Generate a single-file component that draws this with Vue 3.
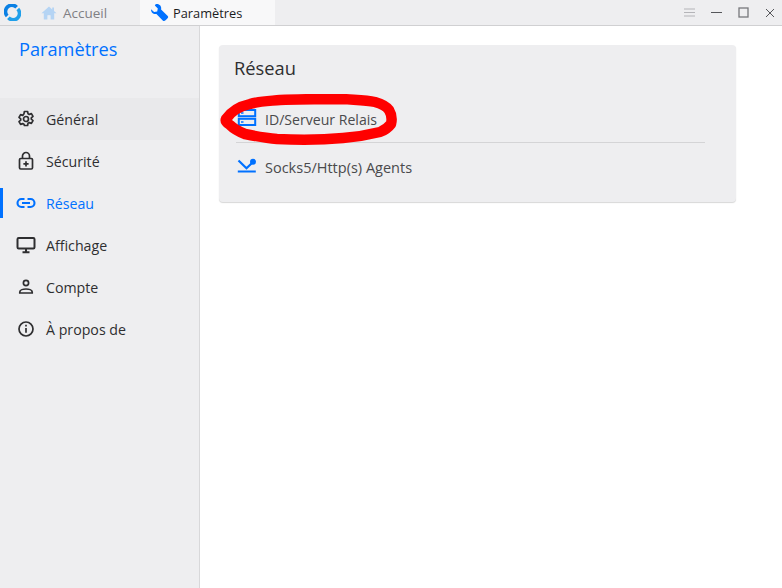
<script setup>
const items = [
  { label: 'Général', icon: 'gear', hover: true },
  { label: 'Sécurité', icon: 'lock' },
  { label: 'Réseau', icon: 'link', active: true },
  { label: 'Affichage', icon: 'monitor' },
  { label: 'Compte', icon: 'person' },
  { label: 'À propos de', icon: 'info' },
]
</script>

<template>
  <div class="app">
    <header class="titlebar">
      <div class="logo">
        <svg width="17" height="17" viewBox="0 0 17 17" fill="none">
          <path d="M12.600 3.200A6.300 6.300 0 0 0 3.200 12" stroke="#0a80e4" stroke-width="3.600" />
          <path d="M4.400 13.800A6.300 6.300 0 0 0 13.800 5" stroke="#1f9fea" stroke-width="3.600" />
        </svg>
      </div>
      <div class="tab home">
        <svg width="16" height="16" viewBox="0 0 16 16" fill="#b5d4f4">
          <path d="M8 1.500 .5 8.200h2.300v6.300h3.600v-4.300h3.200v4.300h3.600V8.200h2.300L13 6V2.600h-1.800v1.800L8 1.500Z" />
          <path d="M7.200 10.500h1.600v4H7.200z" fill="#e3eefa" />
        </svg>
        <span>Accueil</span>
      </div>
      <div class="tab current">
        <svg width="19" height="19" viewBox="0 0 18 18" fill="#0071ff">
          <path d="M6.500 1c2.700 0 4.700 2.400 4 5.100l6.300 6.200c.8.800.5 1.600-.6 2.700L15 16.200c-1.100 1-1.900 1.300-2.700.5L6.100 10.400c-2.800.7-5.400-1.500-5.100-4.400l2.900 2.600 2.900-.6.600-2.800-2.800-2.900C5.200 1.100 5.900 1 6.500 1Z" />
        </svg>
        <span>Paramètres</span>
      </div>
      <div class="controls">
        <svg width="11" height="9" viewBox="0 0 11 9" stroke="#b4b4b8" fill="none"><path d="M0 1h11M0 4.500h11M0 8h11" /></svg>
        <svg width="11" height="9" viewBox="0 0 11 9" stroke="#55565a" fill="none"><path d="M0 4.500h11" /></svg>
        <svg width="11" height="11" viewBox="0 0 11 11" stroke="#77787c" stroke-width="1.300" fill="none"><rect x="1" y="1" width="9" height="9" /></svg>
        <svg width="10" height="10" viewBox="0 0 10 10" stroke="#55565a" fill="none"><path d="M1 1l8 8M9 1l-8 8" /></svg>
      </div>
    </header>

    <div class="body">
      <aside class="sidebar">
        <h1 class="side-title">Paramètres</h1>
        <nav class="nav">
          <div v-for="item in items" :key="item.label" class="nav-item" :class="{ hover: item.hover, active: item.active }">
            <svg class="nav-icon" width="20" height="20" viewBox="0 0 20 20" fill="none" stroke="currentColor" stroke-width="1.700">
              <template v-if="item.icon === 'gear'">
                <path stroke-linejoin="round" d="M8.400 2.500h3.200l.4 2.200 1.300.7 2.100-.8 1.600 2.800-1.700 1.400v1.400l1.700 1.400-1.600 2.800-2.100-.8-1.300.7-.4 2.200H8.400L8 15.300l-1.300-.7-2.100.8L3 12.600l1.700-1.400V9.800L3 8.400l1.600-2.800 2.100.8L8 4.700Z" />
                <circle cx="10" cy="10" r="2.500" />
              </template>
              <template v-else-if="item.icon === 'lock'">
                <rect x="3.500" y="7.500" width="13" height="10.500" rx="1.200" />
                <path d="M6.500 7.500V5a3.500 3.500 0 0 1 7 0v2.500M10 10.200v5.300M7.400 12.800h5.200" />
              </template>
              <template v-else-if="item.icon === 'link'">
                <path stroke-width="2.100" d="M8.500 6H5.500a4 4 0 0 0 0 8h3M11.500 6h3a4 4 0 0 1 0 8h-3M6 10h8" />
              </template>
              <template v-else-if="item.icon === 'monitor'">
                <rect x="1.500" y="3" width="17" height="10.500" rx="1.200" stroke-width="2" />
                <path d="M10 14v3M6.500 17.300h7" stroke-width="2" />
              </template>
              <template v-else-if="item.icon === 'person'">
                <circle cx="10" cy="6" r="2.600" />
                <path d="M3.800 16v-1.100c0-1.900 3.500-2.900 6.200-2.900s6.200 1 6.200 2.900V16Z" />
              </template>
              <template v-else>
                <circle cx="10" cy="10" r="7" />
                <path d="M10 9v4.700M10 5.700v1.900" />
              </template>
            </svg>
            <span>{{ item.label }}</span>
          </div>
        </nav>
      </aside>

      <main class="content">
        <section class="card">
          <h2 class="card-title">Réseau</h2>
          <div class="row first">
            <svg width="20" height="20" viewBox="0 0 20 20" fill="none" stroke="#0071ff" stroke-width="2">
              <rect x="1.800" y="1" width="16.400" height="6.200" />
              <rect x="1.800" y="9.800" width="16.400" height="6.200" />
              <path d="M4 4.100h2.500M4 12.900h2.500" stroke-width="1.500" />
            </svg>
            <span>ID/Serveur Relais</span>
          </div>
          <div class="divider"></div>
          <div class="row second">
            <svg width="20" height="20" viewBox="0 0 20 20" fill="none" stroke="#0071ff" stroke-width="2.200">
              <path d="M1.500 3.500 9.500 11.300 15 6M.8 14.500h18" />
              <circle cx="16" cy="4.800" r="3" fill="#0071ff" stroke="none" />
            </svg>
            <span>Socks5/Http(s) Agents</span>
          </div>
        </section>
      </main>
    </div>

    <svg class="scribble" width="190" height="54" viewBox="0 0 190 54" fill="none">
      <path d="M11 25C17 16 26 12 35 10 45 7 55 7 65 6 85 5 108 5 128 5 140 6 151 6 160 8 167 10 172 13 174 16 177 21 177 26 176 30 173 34 170 36 165 38 153 41 141 43 128 44 106 46 84 46 62 45 51 44 40 42 30 40 22 37 18 34 15 31 12 29 10 27 11 25Z" stroke="#ff0000" stroke-width="10.500" stroke-linejoin="round" />
    </svg>
  </div>
</template>

<style>
html, body { margin: 0; background: #fff; }
</style>

<style scoped>
.app {
  position: relative;
  width: 782px;
  height: 588px;
  overflow: hidden;
  display: flex;
  flex-direction: column;
  font-family: "Open Sans", "Noto Sans", sans-serif;
  color: #2e2e30;
}
.titlebar {
  height: 25px;
  flex: none;
  display: flex;
  align-items: center;
  background: #eeeef0;
  border-bottom: 1px solid #d0d0d2;
}
.logo { width: 25px; display: flex; padding-left: 4px; box-sizing: border-box; }
.tab { display: flex; align-items: center; height: 25px; font-size: 12.800px; box-sizing: border-box; }
.home { width: 115px; padding-left: 16px; gap: 6px; color: #808084; font-size: 13.500px; }
.current { width: 135px; padding-left: 10px; gap: 4px; background: #f8f8f9; color: #1c1c1e; }
.controls { margin-left: auto; display: flex; align-items: center; gap: 16px; padding-right: 7px; }
.body { flex: 1; display: flex; min-height: 0; }
.sidebar { width: 199px; flex: none; background: #eeeef0; border-right: 1px solid #d8d8da; }
.side-title {
  margin: 0;
  padding: 9px 0 0 19px;
  height: 62px;
  box-sizing: border-box;
  font-size: 18.200px;
  font-weight: 400;
  line-height: 28px;
  color: #0071ff;
}
.nav { margin-top: 10px; }
.nav-item {
  position: relative;
  height: 42px;
  display: flex;
  align-items: center;
  gap: 10px;
  padding-left: 16px;
  font-size: 14.200px;
  color: #2e2e30;
}
.nav-item.hover { background: #e9e9eb; }
.nav-item.active { color: #0071ff; }
.nav-item.active::before {
  content: "";
  position: absolute;
  left: 0;
  top: 6px;
  width: 3px;
  height: 30px;
  background: #0071ff;
}
.nav-icon { flex: none; }
.content { flex: 1; padding: 19px 46px 0 19px; background: #fff; }
.card {
  height: 157px;
  box-sizing: border-box;
  padding: 10px 31px 0 15px;
  background: #eeeef0;
  border-radius: 4px;
  box-shadow: 0 1px 1px rgba(0, 0, 0, .16);
}
.card-title { margin: 0; font-size: 18.300px; font-weight: 400; line-height: 25px; color: #2e2e30; }
.row { display: flex; align-items: center; gap: 8px; height: 24px; padding-left: 3px; color: #4a4a4c; }
.row.first { margin-top: 27px; font-size: 14.100px; }
.row.second { margin-top: 12px; font-size: 14.500px; }
.divider { height: 1px; background: #d4d4d6; margin-top: 11px; margin-left: 2px; }
.scribble { position: absolute; left: 215px; top: 94px; pointer-events: none; }
</style>
